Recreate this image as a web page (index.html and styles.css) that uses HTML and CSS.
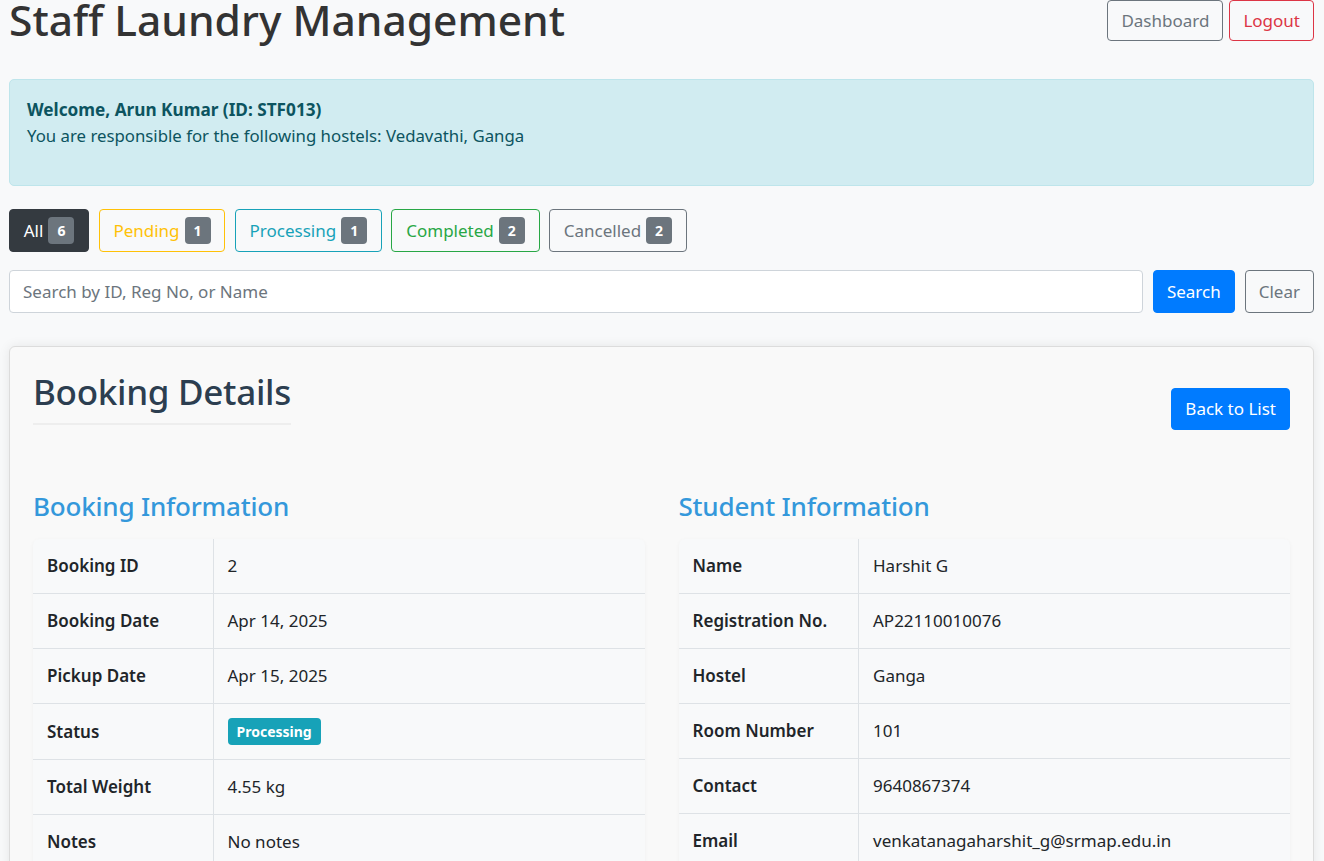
FILE: index.html
```html
<!DOCTYPE html>
<html lang="en">
<head>
<meta charset="utf-8">
<title>Staff Laundry Management</title>
<link rel="stylesheet" href="styles.css">
</head>
<body>
<div class="page">
  <header class="topbar">
    <h1 class="title">Staff Laundry Management</h1>
    <div class="top-actions">
      <a class="btn btn-outline-secondary" href="#">Dashboard</a>
      <a class="btn btn-outline-danger" href="#">Logout</a>
    </div>
  </header>

  <div class="alert">
    <p><strong>Welcome, Arun Kumar (ID: STF013)</strong><br>You are responsible for the following hostels: Vedavathi, Ganga</p>
  </div>

  <div class="filters">
    <a class="fbtn fbtn-dark" href="#">All <span class="count">6</span></a>
    <a class="fbtn fbtn-warning" href="#">Pending <span class="count">1</span></a>
    <a class="fbtn fbtn-info" href="#">Processing <span class="count">1</span></a>
    <a class="fbtn fbtn-success" href="#">Completed <span class="count">2</span></a>
    <a class="fbtn fbtn-secondary" href="#">Cancelled <span class="count">2</span></a>
  </div>

  <form class="search">
    <input class="search-input" type="text" placeholder="Search by ID, Reg No, or Name">
    <button class="sbtn sbtn-primary" type="button">Search</button>
    <button class="sbtn sbtn-outline" type="button">Clear</button>
  </form>

  <section class="card">
    <div class="card-head">
      <h2 class="card-title">Booking Details</h2>
      <a class="sbtn sbtn-primary back" href="#">Back to List</a>
    </div>

    <div class="columns">
      <div class="col">
        <h3 class="section-title">Booking Information</h3>
        <table class="info">
          <tr><th>Booking ID</th><td>2</td></tr>
          <tr><th>Booking Date</th><td>Apr 14, 2025</td></tr>
          <tr><th>Pickup Date</th><td>Apr 15, 2025</td></tr>
          <tr class="status-row"><th>Status</th><td><span class="status">Processing</span></td></tr>
          <tr><th>Total Weight</th><td>4.55 kg</td></tr>
          <tr><th>Notes</th><td>No notes</td></tr>
        </table>
      </div>
      <div class="col">
        <h3 class="section-title">Student Information</h3>
        <table class="info">
          <tr><th>Name</th><td>Harshit G</td></tr>
          <tr><th>Registration No.</th><td>AP22110010076</td></tr>
          <tr><th>Hostel</th><td>Ganga</td></tr>
          <tr><th>Room Number</th><td>101</td></tr>
          <tr><th>Contact</th><td>9640867374</td></tr>
          <tr><th>Email</th><td>venkatanagaharshit_g@srmap.edu.in</td></tr>
        </table>
      </div>
    </div>
  </section>
</div>
</body>
</html>
```

FILE: styles.css
```css
* { box-sizing: border-box; }

html, body {
  margin: 0;
  background: #f8f9fa;
  color: #212529;
  font-family: "Noto Sans", "Open Sans", Arial, sans-serif;
  font-size: 16px;
  line-height: 1.5;
}

.page {
  margin: 0 10px 0 9px;
}

a { text-decoration: none; }

.topbar {
  display: flex;
  justify-content: space-between;
  align-items: center;
  margin-top: -4px;
  margin-bottom: 35px;
}

.title {
  margin: 0;
  font-size: 42.5px;
  font-weight: 500;
  line-height: 48px;
  color: #333;
}

.top-actions {
  display: flex;
  gap: 6px;
}

.btn {
  display: inline-block;
  padding: 6px 13px;
  font-size: 17px;
  line-height: 27px;
  border: 1px solid;
  border-radius: 4px;
  background: transparent;
}

.btn-outline-secondary { color: #6c757d; border-color: #6c757d; }
.btn-outline-danger { color: #dc3545; border-color: #dc3545; }

.alert {
  background: #d1ecf1;
  border: 1px solid #bee5eb;
  color: #0c5460;
  border-radius: 5px;
  padding: 17px 17px 20px;
  margin-bottom: 23px;
}

.alert p {
  margin: 0 0 16px;
  font-size: 16.8px;
  line-height: 26px;
}

.alert strong {
  font-size: 17.2px;
}

.filters {
  display: flex;
  gap: 9.5px;
  margin-bottom: 18px;
}

.fbtn {
  display: inline-flex;
  align-items: center;
  gap: 5px;
  height: 43px;
  padding: 0 13.75px;
  font-size: 17px;
  border: 1px solid;
  border-radius: 4px;
}

.fbtn-dark { background: #343a40; border-color: #343a40; color: #fff; }
.fbtn-warning { color: #ffc107; border-color: #ffc107; }
.fbtn-info { color: #17a2b8; border-color: #17a2b8; }
.fbtn-success { color: #28a745; border-color: #28a745; }
.fbtn-secondary { color: #6c757d; border-color: #6c757d; }

.count {
  display: inline-block;
  min-width: 26px;
  padding: 0 8px;
  height: 27px;
  line-height: 27px;
  text-align: center;
  background: #6c757d;
  color: #fff;
  font-size: 14px;
  font-weight: 700;
  border-radius: 4px;
}

.search {
  display: flex;
  gap: 10px;
  margin: 0 0 33px;
}

.search-input {
  flex: 1;
  height: 43px;
  padding: 0 13px;
  font: inherit;
  font-size: 17px;
  color: #495057;
  background: #fff;
  border: 1px solid #ced4da;
  border-radius: 4px;
}

.search-input::placeholder { color: #6c757d; }

.sbtn {
  display: inline-flex;
  align-items: center;
  height: 43px;
  padding: 0 13px;
  font: inherit;
  font-size: 17px;
  border: 1px solid;
  border-radius: 4px;
  cursor: pointer;
}

.sbtn-primary { background: #007bff; border-color: #007bff; color: #fff; }
.sbtn-outline { background: transparent; border-color: #6c757d; color: #6c757d; }

.card {
  background: #f9f9f9;
  border: 1px solid #dcdcdc;
  border-radius: 6px;
  box-shadow: 0 0 12px rgba(0, 0, 0, 0.08);
  padding: 23px 23px 40px;
}

.card-head {
  display: flex;
  justify-content: space-between;
  align-items: flex-start;
  margin-bottom: 59px;
}

.card-title {
  margin: 0;
  padding-bottom: 9px;
  border-bottom: 2px solid #eee;
  font-size: 35px;
  font-weight: 500;
  letter-spacing: -0.3px;
  line-height: 44px;
  color: #2c3e50;
}

.card-head .back { margin-top: 18px; height: 42px; }

.columns {
  display: grid;
  grid-template-columns: 1fr 1fr;
  column-gap: 34px;
}

.section-title {
  margin: 0 0 16px;
  font-size: 26px;
  font-weight: 500;
  letter-spacing: -0.2px;
  line-height: 34px;
  color: #3498db;
}

.info {
  width: 100%;
  border-collapse: collapse;
  background: #f8f9fa;
  border-radius: 6px;
  box-shadow: 0 1px 4px rgba(0, 0, 0, 0.04);
  font-size: 17px;
}

.info th, .info td {
  padding: 15px 14px;
  line-height: 24px;
  text-align: left;
  vertical-align: middle;
  border-top: 1px solid #dee2e6;
}

.info tr:first-child th, .info tr:first-child td { border-top: 0; }

.info th {
  width: 180px;
  font-weight: 600;
  border-right: 1px solid #dee2e6;
}

.status-row th, .status-row td { padding-top: 14px; padding-bottom: 14px; }

.status {
  display: inline-block;
  vertical-align: middle;
  padding: 0 9px;
  line-height: 27px;
  background: #17a2b8;
  color: #fff;
  font-size: 14px;
  font-weight: 700;
  border-radius: 4px;
}
```
